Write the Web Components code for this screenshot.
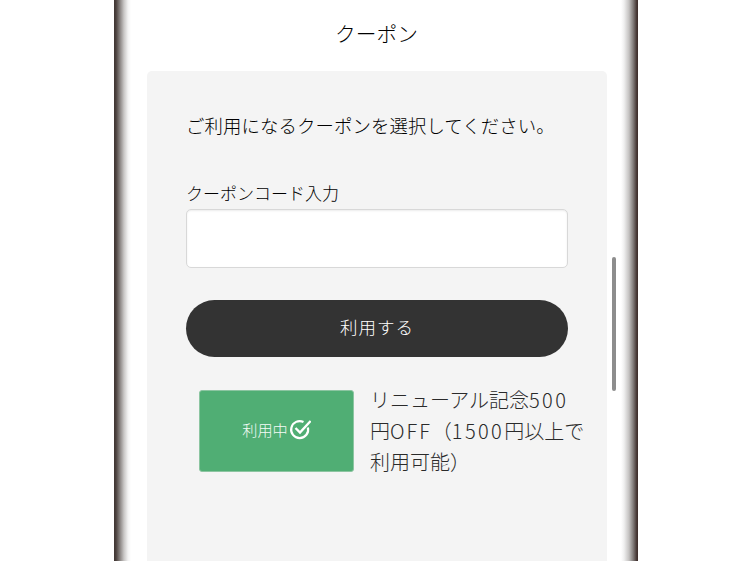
<!DOCTYPE html>
<html lang="ja"><head><meta charset="utf-8"><style>
html,body{margin:0;height:561px;overflow:hidden;background:#fff}
body{font-family:"Noto Sans CJK JP","Noto Sans",sans-serif;color:#222}
.num{letter-spacing:2.4px}
.off{letter-spacing:2px}
.line{display:block;white-space:nowrap}
</style></head><body>
<phone-frame>
  <coupon-panel>
    <coupon-field></coupon-field>
    <pill-button>利用する</pill-button>
    <coupon-item><span class="line">リニューアル記念<span class="num">500</span></span><span class="line">円<span class="off">OFF</span>（<span class="num">1500</span>円以上で</span><span class="line">利用可能）</span></coupon-item>
  </coupon-panel>
</phone-frame>
<script>
function def(name,html){customElements.define(name,class extends HTMLElement{constructor(){super();this.attachShadow({mode:'open'}).innerHTML=html}})}
def('phone-frame',`<style>
:host{display:block;width:524px;height:561px;margin-left:114px;position:relative;overflow:hidden;box-sizing:border-box;padding:0 31px 0 33px;
background:linear-gradient(90deg,#3f3532 0,#4a403d 2px,#8a8583 6px,#c9c7c6 10px,#f3f3f3 14px,#fff 17px,#fff calc(100% - 17px),#f0f0f0 calc(100% - 14px),#c4c2c1 calc(100% - 9px),#85807e calc(100% - 5px),#40312e calc(100% - 1px))}
h1{margin:0;height:71px;font:300 20.7px/67px "Noto Sans CJK JP",sans-serif;text-align:center;color:#000;padding-right:1px}
.bar{position:absolute;left:498px;top:257px;width:4px;height:134px;border-radius:2px;background:#8d8d8d}
</style><h1>クーポン</h1><slot></slot><div class="bar"></div>`);
def('coupon-panel',`<style>
:host{display:block;height:520px;box-sizing:border-box;background:#f4f4f4;border-radius:5px;padding:39px 39px 0 39px}
p{margin:0 0 41px;font:300 18.4px/30px "Noto Sans CJK JP",sans-serif;letter-spacing:.1px;color:#000;white-space:nowrap}
</style><p>ご利用になるクーポンを選択してください。</p><slot></slot>`);
def('coupon-field',`<style>
:host{display:block;margin-bottom:32px}
label{display:block;font:300 17px/24px "Noto Sans CJK JP",sans-serif;color:#000;margin-bottom:4px}
input{display:block;width:100%;box-sizing:border-box;height:59px;background:#fff;border:1.5px solid #d8d8d8;border-radius:5px;box-shadow:inset 0 1px 2px rgba(0,0,0,.08);outline:0}
</style><label for="c">クーポンコード入力</label><input id="c" type="text">`);
def('pill-button',`<style>
:host{display:flex;align-items:center;justify-content:center;height:57px;border-radius:29px;background:#333;color:#fff;font:300 17.5px/1 "Noto Sans CJK JP",sans-serif;letter-spacing:1px;margin-bottom:33px;padding-bottom:3px;box-sizing:border-box}
</style><slot></slot>`);
def('coupon-item',`<style>
:host{display:flex;align-items:flex-start;gap:16px;padding-left:13px;margin-right:-20px;font:300 20px/31px "Noto Sans CJK JP",sans-serif;color:#2a2a2a}
.badge{flex:none;box-sizing:border-box;display:flex;align-items:center;justify-content:center;width:155px;height:82px;padding-bottom:2px;background:#50ae74;border:1px solid #8cc5a1;border-radius:3px;color:#f4fbf6;font-size:15.2px;line-height:1}
svg{width:23px;height:23px;display:block;margin-top:-1px}
.t{width:216px;margin-top:-6px}
</style><div class="badge">利用中<svg viewBox="0 0 23 23" fill="none" stroke="#fff" stroke-width="2.2"><path d="M19.9 9.5A8.5 8.5 0 1 1 15.5 4"/><path d="M7.5 10l4.5 4.5L22.6 3" stroke-width="2.4"/></svg></div><div class="t"><slot></slot></div>`);
</script></body></html>
